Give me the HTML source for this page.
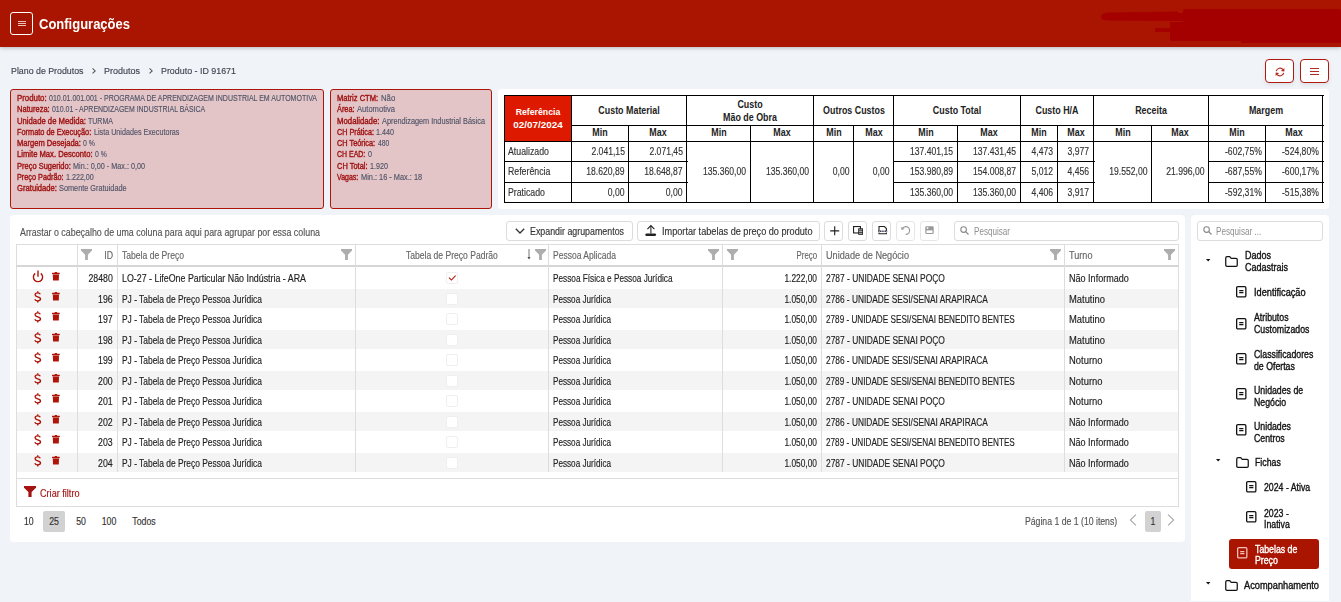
<!DOCTYPE html>
<html><head><meta charset="utf-8"><style>
html,body{margin:0;padding:0;}
body{width:1341px;height:602px;overflow:hidden;position:relative;background:#f0f3f8;font-family:"Liberation Sans", sans-serif;}
.t{position:absolute;white-space:nowrap;}
svg{overflow:visible}
</style></head><body>
<div style="position:absolute;left:0px;top:0px;width:1341px;height:47px;background:#a91500;box-shadow:0 1px 4px rgba(0,0,0,.25);"></div>
<svg style="position:absolute;left:1098px;top:7px" width="243" height="38" viewBox="0 0 243 38"><g fill="#a50000" filter="url(#bl)"><path d="M3 10 Q3 6 10 5.5 L80 4.5 L80 14 L10 13.5 Q3 13 3 10 Z"/><rect x="85" y="2" width="158" height="29" rx="2"/><rect x="76" y="6" width="20" height="8"/><rect x="57" y="21" width="40" height="4"/><rect x="72" y="15" width="20" height="15"/><rect x="72" y="26" width="125" height="8" rx="2"/><rect x="150" y="28" width="93" height="8"/><rect x="143" y="30" width="100" height="6"/></g><defs><filter id="bl"><feGaussianBlur stdDeviation=".5"/></filter></defs></svg>
<div style="position:absolute;left:10px;top:12px;width:21px;height:21px;border:1px solid #fff;border-radius:3px;background:rgba(0,0,0,.03);"></div>
<div style="position:absolute;left:17.5px;top:20.8px;width:8.2px;height:0.9px;background:#ecc0b8;"></div>
<div style="position:absolute;left:17.5px;top:23px;width:8.2px;height:0.9px;background:#ecc0b8;"></div>
<div style="position:absolute;left:17.5px;top:25.2px;width:8.2px;height:0.9px;background:#ecc0b8;"></div>
<div class="t" style="top:17.23px;font-size:14.5px;line-height:14.5px;color:#fff;font-weight:700;left:39px;transform-origin:0 0;transform:scaleX(0.8964);">Configurações</div>
<div class="t" style="top:66.37px;font-size:9.6px;line-height:9.6px;color:#3f4450;-webkit-text-stroke:.15px #3f4450;left:10.5px;transform-origin:0 0;transform:scaleX(0.9183);">Plano de Produtos</div>
<div class="t" style="top:66.37px;font-size:9.6px;line-height:9.6px;color:#3f4450;-webkit-text-stroke:.15px #3f4450;left:104px;transform-origin:0 0;transform:scaleX(0.9373);">Produtos</div>
<div class="t" style="top:66.37px;font-size:9.6px;line-height:9.6px;color:#3f4450;-webkit-text-stroke:.15px #3f4450;left:161.4px;transform-origin:0 0;transform:scaleX(0.9250);">Produto - ID 91671</div>
<svg style="position:absolute;left:91.8px;top:68.3px" width="4" height="6" viewBox="0 0 4 6"><path d="M.5 .4 L3.2 2.9 L.5 5.4" stroke="#555" stroke-width="1.05" fill="none"/></svg>
<svg style="position:absolute;left:148.8px;top:68.3px" width="4" height="6" viewBox="0 0 4 6"><path d="M.5 .4 L3.2 2.9 L.5 5.4" stroke="#555" stroke-width="1.05" fill="none"/></svg>
<div style="position:absolute;left:1265px;top:59px;width:29px;height:24px;box-sizing:border-box;background:#fff;border:1.5px solid #b01a10;border-radius:4px;box-shadow:0 2px 4px rgba(0,0,0,.08);"></div>
<div style="position:absolute;left:1300px;top:59px;width:29px;height:24px;box-sizing:border-box;background:#fff;border:1.5px solid #b01a10;border-radius:4px;box-shadow:0 2px 4px rgba(0,0,0,.08);"></div>
<svg style="position:absolute;left:1274.8px;top:66.5px" width="10" height="10" viewBox="0 0 10 10"><path d="M1.3 4.2 A3.8 3.8 0 0 1 8 2.6" stroke="#b52a20" stroke-width="1.2" fill="none"/><path d="M9.4 1 L9.4 4.6 L5.8 4 Z" fill="#b52a20"/><path d="M8.7 5.8 A3.8 3.8 0 0 1 2 7.4" stroke="#b52a20" stroke-width="1.2" fill="none"/><path d="M.6 9 L.6 5.4 L4.2 6 Z" fill="#b52a20"/></svg>
<div style="position:absolute;left:1310px;top:68px;width:8.5px;height:1.2px;background:#b52a20;"></div>
<div style="position:absolute;left:1310px;top:71px;width:8.5px;height:1.2px;background:#b52a20;"></div>
<div style="position:absolute;left:1310px;top:74px;width:8.5px;height:1.2px;background:#b52a20;"></div>
<div style="position:absolute;left:10px;top:89px;width:314px;height:120px;box-sizing:border-box;background:#e4c5c7;border:1.2px solid #ad1509;border-radius:3px;"></div>
<div style="position:absolute;left:330px;top:89px;width:162px;height:120px;box-sizing:border-box;background:#e4c5c7;border:1.2px solid #ad1509;border-radius:3px;"></div>
<div class="t" style="top:93.94px;font-size:8.7px;line-height:8.7px;color:#a01414;-webkit-text-stroke:.4px #a01414;left:17px;transform-origin:0 0;transform:scaleX(0.9012);">Produto:</div>
<div class="t" style="top:93.94px;font-size:8.7px;line-height:8.7px;color:#4f5468;-webkit-text-stroke:.15px #4f5468;left:49.0px;transform-origin:0 0;transform:scaleX(0.8072);">010.01.001.001 - PROGRAMA DE APRENDIZAGEM INDUSTRIAL EM AUTOMOTIVA</div>
<div class="t" style="top:105.04px;font-size:8.7px;line-height:8.7px;color:#a01414;-webkit-text-stroke:.4px #a01414;left:17px;transform-origin:0 0;transform:scaleX(0.8680);">Natureza:</div>
<div class="t" style="top:105.04px;font-size:8.7px;line-height:8.7px;color:#4f5468;-webkit-text-stroke:.15px #4f5468;left:52.1px;transform-origin:0 0;transform:scaleX(0.8007);">010.01 - APRENDIZAGEM INDUSTRIAL BÁSICA</div>
<div class="t" style="top:116.94px;font-size:8.7px;line-height:8.7px;color:#a01414;-webkit-text-stroke:.4px #a01414;left:17px;transform-origin:0 0;transform:scaleX(0.8873);">Unidade de Medida:</div>
<div class="t" style="top:116.94px;font-size:8.7px;line-height:8.7px;color:#4f5468;-webkit-text-stroke:.15px #4f5468;left:88.4px;transform-origin:0 0;transform:scaleX(0.8093);">TURMA</div>
<div class="t" style="top:128.04px;font-size:8.7px;line-height:8.7px;color:#a01414;-webkit-text-stroke:.4px #a01414;left:17px;transform-origin:0 0;transform:scaleX(0.8489);">Formato de Execução:</div>
<div class="t" style="top:128.04px;font-size:8.7px;line-height:8.7px;color:#4f5468;-webkit-text-stroke:.15px #4f5468;left:93.60000000000001px;transform-origin:0 0;transform:scaleX(0.8264);">Lista Unidades Executoras</div>
<div class="t" style="top:138.94px;font-size:8.7px;line-height:8.7px;color:#a01414;-webkit-text-stroke:.4px #a01414;left:17px;transform-origin:0 0;transform:scaleX(0.8705);">Margem Desejada:</div>
<div class="t" style="top:138.94px;font-size:8.7px;line-height:8.7px;color:#4f5468;-webkit-text-stroke:.15px #4f5468;left:83.30000000000001px;transform-origin:0 0;transform:scaleX(0.7942);">0 %</div>
<div class="t" style="top:149.84px;font-size:8.7px;line-height:8.7px;color:#a01414;-webkit-text-stroke:.4px #a01414;left:17px;transform-origin:0 0;transform:scaleX(0.8795);">Limite Max. Desconto:</div>
<div class="t" style="top:149.84px;font-size:8.7px;line-height:8.7px;color:#4f5468;-webkit-text-stroke:.15px #4f5468;left:95.0px;transform-origin:0 0;transform:scaleX(0.7875);">0 %</div>
<div class="t" style="top:161.74px;font-size:8.7px;line-height:8.7px;color:#a01414;-webkit-text-stroke:.4px #a01414;left:17px;transform-origin:0 0;transform:scaleX(0.8634);">Preço Sugerido:</div>
<div class="t" style="top:161.74px;font-size:8.7px;line-height:8.7px;color:#4f5468;-webkit-text-stroke:.15px #4f5468;left:73.2px;transform-origin:0 0;transform:scaleX(0.8330);">Min.: 0,00 - Max.: 0,00</div>
<div class="t" style="top:172.54px;font-size:8.7px;line-height:8.7px;color:#a01414;-webkit-text-stroke:.4px #a01414;left:17px;transform-origin:0 0;transform:scaleX(0.8389);">Preço Padrão:</div>
<div class="t" style="top:172.54px;font-size:8.7px;line-height:8.7px;color:#4f5468;-webkit-text-stroke:.15px #4f5468;left:66.0px;transform-origin:0 0;transform:scaleX(0.8218);">1.222,00</div>
<div class="t" style="top:183.84px;font-size:8.7px;line-height:8.7px;color:#a01414;-webkit-text-stroke:.4px #a01414;left:17px;transform-origin:0 0;transform:scaleX(0.8809);">Gratuidade:</div>
<div class="t" style="top:183.84px;font-size:8.7px;line-height:8.7px;color:#4f5468;-webkit-text-stroke:.15px #4f5468;left:59.4px;transform-origin:0 0;transform:scaleX(0.8432);">Somente Gratuidade</div>
<div class="t" style="top:94.14px;font-size:8.7px;line-height:8.7px;color:#a01414;-webkit-text-stroke:.4px #a01414;left:337px;transform-origin:0 0;transform:scaleX(0.8690);">Matriz CTM:</div>
<div class="t" style="top:94.14px;font-size:8.7px;line-height:8.7px;color:#4f5468;-webkit-text-stroke:.15px #4f5468;left:380.5px;transform-origin:0 0;transform:scaleX(0.8910);">Não</div>
<div class="t" style="top:105.24px;font-size:8.7px;line-height:8.7px;color:#a01414;-webkit-text-stroke:.4px #a01414;left:337px;transform-origin:0 0;transform:scaleX(0.8476);">Área:</div>
<div class="t" style="top:105.24px;font-size:8.7px;line-height:8.7px;color:#4f5468;-webkit-text-stroke:.15px #4f5468;left:357.0px;transform-origin:0 0;transform:scaleX(0.8742);">Automotiva</div>
<div class="t" style="top:116.84px;font-size:8.7px;line-height:8.7px;color:#a01414;-webkit-text-stroke:.4px #a01414;left:337px;transform-origin:0 0;transform:scaleX(0.8956);">Modalidade:</div>
<div class="t" style="top:116.84px;font-size:8.7px;line-height:8.7px;color:#4f5468;-webkit-text-stroke:.15px #4f5468;left:381.79999999999995px;transform-origin:0 0;transform:scaleX(0.8430);">Aprendizagem Industrial Básica</div>
<div class="t" style="top:128.14px;font-size:8.7px;line-height:8.7px;color:#a01414;-webkit-text-stroke:.4px #a01414;left:337px;transform-origin:0 0;transform:scaleX(0.8329);">CH Prática:</div>
<div class="t" style="top:128.14px;font-size:8.7px;line-height:8.7px;color:#4f5468;-webkit-text-stroke:.15px #4f5468;left:376.4px;transform-origin:0 0;transform:scaleX(0.8230);">1.440</div>
<div class="t" style="top:138.94px;font-size:8.7px;line-height:8.7px;color:#a01414;-webkit-text-stroke:.4px #a01414;left:337px;transform-origin:0 0;transform:scaleX(0.8423);">CH Teórica:</div>
<div class="t" style="top:138.94px;font-size:8.7px;line-height:8.7px;color:#4f5468;-webkit-text-stroke:.15px #4f5468;left:377.5px;transform-origin:0 0;transform:scaleX(0.7793);">480</div>
<div class="t" style="top:149.74px;font-size:8.7px;line-height:8.7px;color:#a01414;-webkit-text-stroke:.4px #a01414;left:337px;transform-origin:0 0;transform:scaleX(0.8028);">CH EAD:</div>
<div class="t" style="top:149.74px;font-size:8.7px;line-height:8.7px;color:#4f5468;-webkit-text-stroke:.15px #4f5468;left:367.7px;transform-origin:0 0;transform:scaleX(0.8258);">0</div>
<div class="t" style="top:162.04px;font-size:8.7px;line-height:8.7px;color:#a01414;-webkit-text-stroke:.4px #a01414;left:337px;transform-origin:0 0;transform:scaleX(0.8573);">CH Total:</div>
<div class="t" style="top:162.04px;font-size:8.7px;line-height:8.7px;color:#4f5468;-webkit-text-stroke:.15px #4f5468;left:369.9px;transform-origin:0 0;transform:scaleX(0.8230);">1.920</div>
<div class="t" style="top:172.84px;font-size:8.7px;line-height:8.7px;color:#a01414;-webkit-text-stroke:.4px #a01414;left:337px;transform-origin:0 0;transform:scaleX(0.8066);">Vagas:</div>
<div class="t" style="top:172.84px;font-size:8.7px;line-height:8.7px;color:#4f5468;-webkit-text-stroke:.15px #4f5468;left:360.7px;transform-origin:0 0;transform:scaleX(0.8506);">Min.: 16 - Max.: 18</div>
<div style="position:absolute;left:498px;top:89px;width:830.5px;height:119.5px;background:#fff;border-radius:4px;"></div>
<div style="position:absolute;left:505px;top:96px;width:66px;height:45px;background:#dd1a00;"></div>
<div style="position:absolute;left:504px;top:94.5px;width:819.5px;height:1.2px;background:#000;"></div>
<div style="position:absolute;left:504px;top:201.5px;width:819.5px;height:1.2px;background:#000;"></div>
<div style="position:absolute;left:504px;top:140.5px;width:819.5px;height:1.2px;background:#000;"></div>
<div style="position:absolute;left:571px;top:125.0px;width:752.5px;height:1.2px;background:#000;"></div>
<div style="position:absolute;left:504px;top:161.0px;width:183.5px;height:1.2px;background:#000;"></div>
<div style="position:absolute;left:893.5px;top:161.0px;width:201.0px;height:1.2px;background:#000;"></div>
<div style="position:absolute;left:1208.5px;top:161.0px;width:115.0px;height:1.2px;background:#000;"></div>
<div style="position:absolute;left:504px;top:182.0px;width:183.5px;height:1.2px;background:#000;"></div>
<div style="position:absolute;left:893.5px;top:182.0px;width:201.0px;height:1.2px;background:#000;"></div>
<div style="position:absolute;left:1208.5px;top:182.0px;width:115.0px;height:1.2px;background:#000;"></div>
<div style="position:absolute;left:503.5px;top:95px;width:1.2px;height:108px;background:#000;"></div>
<div style="position:absolute;left:570.5px;top:95px;width:1.2px;height:108px;background:#000;"></div>
<div style="position:absolute;left:686.0px;top:95px;width:1.2px;height:108px;background:#000;"></div>
<div style="position:absolute;left:813.0px;top:95px;width:1.2px;height:108px;background:#000;"></div>
<div style="position:absolute;left:893.0px;top:95px;width:1.2px;height:108px;background:#000;"></div>
<div style="position:absolute;left:1020.0px;top:95px;width:1.2px;height:108px;background:#000;"></div>
<div style="position:absolute;left:1093.0px;top:95px;width:1.2px;height:108px;background:#000;"></div>
<div style="position:absolute;left:1208.0px;top:95px;width:1.2px;height:108px;background:#000;"></div>
<div style="position:absolute;left:1322.0px;top:95px;width:1.2px;height:108px;background:#000;"></div>
<div style="position:absolute;left:628.0px;top:125.5px;width:1.2px;height:77.5px;background:#000;"></div>
<div style="position:absolute;left:750.0px;top:125.5px;width:1.2px;height:77.5px;background:#000;"></div>
<div style="position:absolute;left:853.0px;top:125.5px;width:1.2px;height:77.5px;background:#000;"></div>
<div style="position:absolute;left:957.0px;top:125.5px;width:1.2px;height:77.5px;background:#000;"></div>
<div style="position:absolute;left:1057.0px;top:125.5px;width:1.2px;height:77.5px;background:#000;"></div>
<div style="position:absolute;left:1151.0px;top:125.5px;width:1.2px;height:77.5px;background:#000;"></div>
<div style="position:absolute;left:1265.0px;top:125.5px;width:1.2px;height:77.5px;background:#000;"></div>
<div class="t" style="top:107.36px;font-size:9.5px;line-height:9.5px;color:#fff;font-weight:700;left:537.5px;transform-origin:50% 0;transform:translateX(-50%) scaleX(0.9178);">Referência</div>
<div class="t" style="top:120.26px;font-size:9.5px;line-height:9.5px;color:#fff;font-weight:700;left:537.5px;transform-origin:50% 0;transform:translateX(-50%) scaleX(1.0390);">02/07/2024</div>
<div class="t" style="top:106.04px;font-size:10px;line-height:10px;color:#222;font-weight:700;left:628.75px;transform-origin:50% 0;transform:translateX(-50%) scaleX(0.8900);">Custo Material</div>
<div class="t" style="top:106.04px;font-size:10px;line-height:10px;color:#222;font-weight:700;left:853.5px;transform-origin:50% 0;transform:translateX(-50%) scaleX(0.8900);">Outros Custos</div>
<div class="t" style="top:106.04px;font-size:10px;line-height:10px;color:#222;font-weight:700;left:957.0px;transform-origin:50% 0;transform:translateX(-50%) scaleX(0.8900);">Custo Total</div>
<div class="t" style="top:106.04px;font-size:10px;line-height:10px;color:#222;font-weight:700;left:1057.0px;transform-origin:50% 0;transform:translateX(-50%) scaleX(0.8900);">Custo H/A</div>
<div class="t" style="top:106.04px;font-size:10px;line-height:10px;color:#222;font-weight:700;left:1151.0px;transform-origin:50% 0;transform:translateX(-50%) scaleX(0.8900);">Receita</div>
<div class="t" style="top:106.04px;font-size:10px;line-height:10px;color:#222;font-weight:700;left:1265.75px;transform-origin:50% 0;transform:translateX(-50%) scaleX(0.8900);">Margem</div>
<div class="t" style="top:99.54px;font-size:10px;line-height:10px;color:#222;font-weight:700;left:750px;transform-origin:50% 0;transform:translateX(-50%) scaleX(0.8900);">Custo</div>
<div class="t" style="top:112.54px;font-size:10px;line-height:10px;color:#222;font-weight:700;left:750px;transform-origin:50% 0;transform:translateX(-50%) scaleX(0.8900);">Mão de Obra</div>
<div class="t" style="top:127.64px;font-size:10px;line-height:10px;color:#222;font-weight:700;left:599.75px;transform-origin:50% 0;transform:translateX(-50%) scaleX(0.8900);">Min</div>
<div class="t" style="top:127.64px;font-size:10px;line-height:10px;color:#222;font-weight:700;left:657.5px;transform-origin:50% 0;transform:translateX(-50%) scaleX(0.8900);">Max</div>
<div class="t" style="top:127.64px;font-size:10px;line-height:10px;color:#222;font-weight:700;left:718.5px;transform-origin:50% 0;transform:translateX(-50%) scaleX(0.8900);">Min</div>
<div class="t" style="top:127.64px;font-size:10px;line-height:10px;color:#222;font-weight:700;left:782.0px;transform-origin:50% 0;transform:translateX(-50%) scaleX(0.8900);">Max</div>
<div class="t" style="top:127.64px;font-size:10px;line-height:10px;color:#222;font-weight:700;left:833.5px;transform-origin:50% 0;transform:translateX(-50%) scaleX(0.8900);">Min</div>
<div class="t" style="top:127.64px;font-size:10px;line-height:10px;color:#222;font-weight:700;left:873.5px;transform-origin:50% 0;transform:translateX(-50%) scaleX(0.8900);">Max</div>
<div class="t" style="top:127.64px;font-size:10px;line-height:10px;color:#222;font-weight:700;left:925.5px;transform-origin:50% 0;transform:translateX(-50%) scaleX(0.8900);">Min</div>
<div class="t" style="top:127.64px;font-size:10px;line-height:10px;color:#222;font-weight:700;left:989.0px;transform-origin:50% 0;transform:translateX(-50%) scaleX(0.8900);">Max</div>
<div class="t" style="top:127.64px;font-size:10px;line-height:10px;color:#222;font-weight:700;left:1039.0px;transform-origin:50% 0;transform:translateX(-50%) scaleX(0.8900);">Min</div>
<div class="t" style="top:127.64px;font-size:10px;line-height:10px;color:#222;font-weight:700;left:1075.5px;transform-origin:50% 0;transform:translateX(-50%) scaleX(0.8900);">Max</div>
<div class="t" style="top:127.64px;font-size:10px;line-height:10px;color:#222;font-weight:700;left:1122.5px;transform-origin:50% 0;transform:translateX(-50%) scaleX(0.8900);">Min</div>
<div class="t" style="top:127.64px;font-size:10px;line-height:10px;color:#222;font-weight:700;left:1180.0px;transform-origin:50% 0;transform:translateX(-50%) scaleX(0.8900);">Max</div>
<div class="t" style="top:127.64px;font-size:10px;line-height:10px;color:#222;font-weight:700;left:1237.0px;transform-origin:50% 0;transform:translateX(-50%) scaleX(0.8900);">Min</div>
<div class="t" style="top:127.64px;font-size:10px;line-height:10px;color:#222;font-weight:700;left:1294.0px;transform-origin:50% 0;transform:translateX(-50%) scaleX(0.8900);">Max</div>
<div class="t" style="top:146.94px;font-size:10px;line-height:10px;color:#333;-webkit-text-stroke:.15px #333;left:508.3px;transform-origin:0 0;transform:scaleX(0.8750);">Atualizado</div>
<div class="t" style="top:166.94px;font-size:10px;line-height:10px;color:#333;-webkit-text-stroke:.15px #333;left:508.3px;transform-origin:0 0;transform:scaleX(0.8750);">Referência</div>
<div class="t" style="top:187.84px;font-size:10px;line-height:10px;color:#333;-webkit-text-stroke:.15px #333;left:508.3px;transform-origin:0 0;transform:scaleX(0.8750);">Praticado</div>
<div class="t" style="top:146.94px;font-size:10px;line-height:10px;color:#333;-webkit-text-stroke:.15px #333;right:716.5px;transform-origin:100% 0;transform:scaleX(0.8600);">2.041,15</div>
<div class="t" style="top:166.94px;font-size:10px;line-height:10px;color:#333;-webkit-text-stroke:.15px #333;right:716.5px;transform-origin:100% 0;transform:scaleX(0.8600);">18.620,89</div>
<div class="t" style="top:187.84px;font-size:10px;line-height:10px;color:#333;-webkit-text-stroke:.15px #333;right:716.5px;transform-origin:100% 0;transform:scaleX(0.8600);">0,00</div>
<div class="t" style="top:146.94px;font-size:10px;line-height:10px;color:#333;-webkit-text-stroke:.15px #333;right:658.5px;transform-origin:100% 0;transform:scaleX(0.8600);">2.071,45</div>
<div class="t" style="top:166.94px;font-size:10px;line-height:10px;color:#333;-webkit-text-stroke:.15px #333;right:658.5px;transform-origin:100% 0;transform:scaleX(0.8600);">18.648,87</div>
<div class="t" style="top:187.84px;font-size:10px;line-height:10px;color:#333;-webkit-text-stroke:.15px #333;right:658.5px;transform-origin:100% 0;transform:scaleX(0.8600);">0,00</div>
<div class="t" style="top:146.94px;font-size:10px;line-height:10px;color:#333;-webkit-text-stroke:.15px #333;right:387.5px;transform-origin:100% 0;transform:scaleX(0.8600);">137.401,15</div>
<div class="t" style="top:166.94px;font-size:10px;line-height:10px;color:#333;-webkit-text-stroke:.15px #333;right:387.5px;transform-origin:100% 0;transform:scaleX(0.8600);">153.980,89</div>
<div class="t" style="top:187.84px;font-size:10px;line-height:10px;color:#333;-webkit-text-stroke:.15px #333;right:387.5px;transform-origin:100% 0;transform:scaleX(0.8600);">135.360,00</div>
<div class="t" style="top:146.94px;font-size:10px;line-height:10px;color:#333;-webkit-text-stroke:.15px #333;right:324.5px;transform-origin:100% 0;transform:scaleX(0.8600);">137.431,45</div>
<div class="t" style="top:166.94px;font-size:10px;line-height:10px;color:#333;-webkit-text-stroke:.15px #333;right:324.5px;transform-origin:100% 0;transform:scaleX(0.8600);">154.008,87</div>
<div class="t" style="top:187.84px;font-size:10px;line-height:10px;color:#333;-webkit-text-stroke:.15px #333;right:324.5px;transform-origin:100% 0;transform:scaleX(0.8600);">135.360,00</div>
<div class="t" style="top:146.94px;font-size:10px;line-height:10px;color:#333;-webkit-text-stroke:.15px #333;right:287.5px;transform-origin:100% 0;transform:scaleX(0.8600);">4,473</div>
<div class="t" style="top:166.94px;font-size:10px;line-height:10px;color:#333;-webkit-text-stroke:.15px #333;right:287.5px;transform-origin:100% 0;transform:scaleX(0.8600);">5,012</div>
<div class="t" style="top:187.84px;font-size:10px;line-height:10px;color:#333;-webkit-text-stroke:.15px #333;right:287.5px;transform-origin:100% 0;transform:scaleX(0.8600);">4,406</div>
<div class="t" style="top:146.94px;font-size:10px;line-height:10px;color:#333;-webkit-text-stroke:.15px #333;right:251.5px;transform-origin:100% 0;transform:scaleX(0.8600);">3,977</div>
<div class="t" style="top:166.94px;font-size:10px;line-height:10px;color:#333;-webkit-text-stroke:.15px #333;right:251.5px;transform-origin:100% 0;transform:scaleX(0.8600);">4,456</div>
<div class="t" style="top:187.84px;font-size:10px;line-height:10px;color:#333;-webkit-text-stroke:.15px #333;right:251.5px;transform-origin:100% 0;transform:scaleX(0.8600);">3,917</div>
<div class="t" style="top:146.94px;font-size:10px;line-height:10px;color:#333;-webkit-text-stroke:.15px #333;right:79.5px;transform-origin:100% 0;transform:scaleX(0.8600);">-602,75%</div>
<div class="t" style="top:166.94px;font-size:10px;line-height:10px;color:#333;-webkit-text-stroke:.15px #333;right:79.5px;transform-origin:100% 0;transform:scaleX(0.8600);">-687,55%</div>
<div class="t" style="top:187.84px;font-size:10px;line-height:10px;color:#333;-webkit-text-stroke:.15px #333;right:79.5px;transform-origin:100% 0;transform:scaleX(0.8600);">-592,31%</div>
<div class="t" style="top:146.94px;font-size:10px;line-height:10px;color:#333;-webkit-text-stroke:.15px #333;right:22.5px;transform-origin:100% 0;transform:scaleX(0.8600);">-524,80%</div>
<div class="t" style="top:166.94px;font-size:10px;line-height:10px;color:#333;-webkit-text-stroke:.15px #333;right:22.5px;transform-origin:100% 0;transform:scaleX(0.8600);">-600,17%</div>
<div class="t" style="top:187.84px;font-size:10px;line-height:10px;color:#333;-webkit-text-stroke:.15px #333;right:22.5px;transform-origin:100% 0;transform:scaleX(0.8600);">-515,38%</div>
<div class="t" style="top:166.94px;font-size:10px;line-height:10px;color:#333;-webkit-text-stroke:.15px #333;right:594.5px;transform-origin:100% 0;transform:scaleX(0.8600);">135.360,00</div>
<div class="t" style="top:166.94px;font-size:10px;line-height:10px;color:#333;-webkit-text-stroke:.15px #333;right:531.5px;transform-origin:100% 0;transform:scaleX(0.8600);">135.360,00</div>
<div class="t" style="top:166.94px;font-size:10px;line-height:10px;color:#333;-webkit-text-stroke:.15px #333;right:491.5px;transform-origin:100% 0;transform:scaleX(0.8600);">0,00</div>
<div class="t" style="top:166.94px;font-size:10px;line-height:10px;color:#333;-webkit-text-stroke:.15px #333;right:451.5px;transform-origin:100% 0;transform:scaleX(0.8600);">0,00</div>
<div class="t" style="top:166.94px;font-size:10px;line-height:10px;color:#333;-webkit-text-stroke:.15px #333;right:193.5px;transform-origin:100% 0;transform:scaleX(0.8600);">19.552,00</div>
<div class="t" style="top:166.94px;font-size:10px;line-height:10px;color:#333;-webkit-text-stroke:.15px #333;right:136.5px;transform-origin:100% 0;transform:scaleX(0.8600);">21.996,00</div>
<div style="position:absolute;left:10px;top:215px;width:1175px;height:327px;background:#fff;border-radius:4px;"></div>
<div class="t" style="top:228.24px;font-size:10px;line-height:10px;color:#555;-webkit-text-stroke:.15px #555;left:20px;transform-origin:0 0;transform:scaleX(0.8861);">Arrastar o cabeçalho de uma coluna para aqui para agrupar por essa coluna</div>
<div style="position:absolute;left:506px;top:221px;width:127px;height:20px;box-sizing:border-box;background:#fff;border:1px solid #dcdcdc;border-radius:3px;"></div>
<svg style="position:absolute;left:515px;top:227.5px" width="10" height="6" viewBox="0 0 10 6"><path d="M.8 .8 L5 5 L9.2 .8" stroke="#333" stroke-width="1.3" fill="none"/></svg>
<div class="t" style="top:227.04px;font-size:10px;line-height:10px;color:#333;-webkit-text-stroke:.15px #333;left:530.4px;transform-origin:0 0;transform:scaleX(0.8852);">Expandir agrupamentos</div>
<div style="position:absolute;left:637px;top:221px;width:183px;height:20px;box-sizing:border-box;background:#fff;border:1px solid #dcdcdc;border-radius:3px;"></div>
<svg style="position:absolute;left:645px;top:225px" width="12" height="12" viewBox="0 0 12 12"><path d="M5.9 .8 V8.6" stroke="#222" stroke-width="1.05"/><path d="M2.4 4.1 L5.9 .6 L9.4 4.1" stroke="#222" stroke-width="1.1" fill="none"/><rect x=".3" y="8.4" width="10.8" height="2.7" rx="1.3" fill="#222"/></svg>
<div class="t" style="top:227.04px;font-size:10px;line-height:10px;color:#333;-webkit-text-stroke:.15px #333;left:661.5px;transform-origin:0 0;transform:scaleX(0.9146);">Importar tabelas de preço do produto</div>
<div style="position:absolute;left:824px;top:221px;width:19px;height:20px;box-sizing:border-box;background:#fff;border:1px solid #dcdcdc;border-radius:3px;"></div>
<div style="position:absolute;left:848px;top:221px;width:19px;height:20px;box-sizing:border-box;background:#fff;border:1px solid #dcdcdc;border-radius:3px;"></div>
<div style="position:absolute;left:872px;top:221px;width:19px;height:20px;box-sizing:border-box;background:#fff;border:1px solid #dcdcdc;border-radius:3px;"></div>
<div style="position:absolute;left:896px;top:221px;width:19px;height:20px;box-sizing:border-box;background:#fff;border:1px solid #e6e6e6;border-radius:3px;"></div>
<div style="position:absolute;left:920px;top:221px;width:19px;height:20px;box-sizing:border-box;background:#fff;border:1px solid #e6e6e6;border-radius:3px;"></div>
<svg style="position:absolute;left:829.8px;top:225.8px" width="10" height="10" viewBox="0 0 10 10"><path d="M4.7 .3 V9.3 M.2 4.8 H9.2" stroke="#222" stroke-width="1.15"/></svg>
<svg style="position:absolute;left:853px;top:225.8px" width="11" height="9" viewBox="0 0 11 9"><rect x=".55" y=".55" width="6.9" height="6.4" fill="none" stroke="#222" stroke-width="1.1"/><rect x="5.2" y="2.3" width="4.8" height="6.5" fill="#222"/><path d="M6.1 3.9 H9.2 M6.1 5.6 H9.2 M6.1 7.3 H9.2" stroke="#e8e8e8" stroke-width=".8"/></svg>
<svg style="position:absolute;left:877.6px;top:225.8px" width="10" height="9" viewBox="0 0 10 9"><path d="M1 5 V.55 H6.4 L8.4 2.5 V5" fill="none" stroke="#222" stroke-width="1.1"/><path d="M.2 5.3 H9.2" stroke="#3a3a50" stroke-width="1.5" stroke-dasharray="1.2 .5"/><path d="M1 6.6 V7.8 H8.4 V6.6" fill="none" stroke="#222" stroke-width="1.1"/></svg>
<svg style="position:absolute;left:900px;top:225.5px" width="11" height="10" viewBox="0 0 11 10"><path d="M2.8 2.2 Q4.1 .6 5.7 .6 A3.9 3.9 0 0 1 5.7 8.4" fill="none" stroke="#999" stroke-width="1.2"/><path d="M1.2 .8 L1.5 4.1 L4.5 3.1 Z" fill="#999"/></svg>
<svg style="position:absolute;left:925px;top:225.8px" width="9" height="9" viewBox="0 0 9 9"><rect x=".3" y=".2" width="8.4" height="7.9" rx="1.3" fill="#999"/><rect x="1.5" y="4.4" width="6" height="2.6" fill="#fff"/><rect x="1.8" y="1.2" width="1.5" height="1.7" fill="#fff"/></svg>
<div style="position:absolute;left:954px;top:221px;width:225px;height:20px;box-sizing:border-box;background:#fff;border:1px solid #dcdcdc;border-radius:3px;"></div>
<svg style="position:absolute;left:960px;top:225.6px" width="9" height="9" viewBox="0 0 9 9"><circle cx="3.6" cy="3.6" r="2.8" fill="none" stroke="#888" stroke-width="1.1"/><path d="M5.7 5.7 L8.5 8.5" stroke="#888" stroke-width="1.2"/></svg>
<div class="t" style="top:227.04px;font-size:10px;line-height:10px;color:#8f8f8f;-webkit-text-stroke:0;left:973.7px;transform-origin:0 0;transform:scaleX(0.8096);">Pesquisar</div>
<div style="position:absolute;left:16px;top:244px;width:1163px;height:235px;box-sizing:border-box;border:1px solid #ddd;border-bottom:none;"></div>
<div style="position:absolute;left:16px;top:265px;width:1163px;height:2px;background:#d6d6d6;"></div>
<div style="position:absolute;left:17px;top:289px;width:1161px;height:19px;background:#f4f4f4;"></div>
<div style="position:absolute;left:17px;top:330px;width:1161px;height:19px;background:#f4f4f4;"></div>
<div style="position:absolute;left:17px;top:371px;width:1161px;height:19px;background:#f4f4f4;"></div>
<div style="position:absolute;left:17px;top:412px;width:1161px;height:19px;background:#f4f4f4;"></div>
<div style="position:absolute;left:17px;top:453px;width:1161px;height:19px;background:#f4f4f4;"></div>
<div style="position:absolute;left:77px;top:244px;width:1px;height:228px;background:#ddd;"></div>
<div style="position:absolute;left:117px;top:244px;width:1px;height:228px;background:#ddd;"></div>
<div style="position:absolute;left:355px;top:244px;width:1px;height:228px;background:#ddd;"></div>
<div style="position:absolute;left:548px;top:244px;width:1px;height:228px;background:#ddd;"></div>
<div style="position:absolute;left:722px;top:244px;width:1px;height:228px;background:#ddd;"></div>
<div style="position:absolute;left:821px;top:244px;width:1px;height:228px;background:#ddd;"></div>
<div style="position:absolute;left:1064px;top:244px;width:1px;height:228px;background:#ddd;"></div>
<div style="position:absolute;left:16px;top:478px;width:1163px;height:29px;box-sizing:border-box;border:1px solid #ddd;"></div>
<svg style="position:absolute;left:24px;top:485.8px" width="12" height="11" viewBox="0 0 12 11"><path d="M0 0 H12 V1.8 L7.6 6.1 V11 H4.4 V6.1 L0 1.8 Z" fill="#a51212"/></svg>
<div class="t" style="top:488.54px;font-size:10px;line-height:10px;color:#a51212;-webkit-text-stroke:.15px #a51212;left:40.3px;transform-origin:0 0;transform:scaleX(0.9113);">Criar filtro</div>
<svg style="position:absolute;left:81.3px;top:248.6px" width="11" height="11" viewBox="0 0 11 11"><path d="M0 0 H11 V1.6 L6.9 5.8 V11 H4.1 V5.8 L0 1.6 Z" fill="#adadad"/></svg>
<div class="t" style="top:251.04px;font-size:10px;line-height:10px;color:#666;-webkit-text-stroke:.15px #666;right:1228px;transform-origin:100% 0;transform:scaleX(0.8750);">ID</div>
<div class="t" style="top:251.04px;font-size:10px;line-height:10px;color:#666;-webkit-text-stroke:.15px #666;left:122px;transform-origin:0 0;transform:scaleX(0.8578);">Tabela de Preço</div>
<svg style="position:absolute;left:341px;top:248.6px" width="11" height="11" viewBox="0 0 11 11"><path d="M0 0 H11 V1.6 L6.9 5.8 V11 H4.1 V5.8 L0 1.6 Z" fill="#adadad"/></svg>
<div class="t" style="top:251.04px;font-size:10px;line-height:10px;color:#666;-webkit-text-stroke:.15px #666;left:406.2px;transform-origin:0 0;transform:scaleX(0.8556);">Tabela de Preço Padrão</div>
<svg style="position:absolute;left:526.5px;top:249px" width="4" height="11" viewBox="0 0 4 11"><path d="M2 0 V10" stroke="#777" stroke-width="1"/><path d="M.4 8 L2 10.3 L3.6 8 Z" fill="#555"/></svg>
<svg style="position:absolute;left:534.5px;top:248.6px" width="11" height="11" viewBox="0 0 11 11"><path d="M0 0 H11 V1.6 L6.9 5.8 V11 H4.1 V5.8 L0 1.6 Z" fill="#adadad"/></svg>
<div class="t" style="top:251.04px;font-size:10px;line-height:10px;color:#666;-webkit-text-stroke:.15px #666;left:553.2px;transform-origin:0 0;transform:scaleX(0.8519);">Pessoa Aplicada</div>
<svg style="position:absolute;left:708px;top:248.6px" width="11" height="11" viewBox="0 0 11 11"><path d="M0 0 H11 V1.6 L6.9 5.8 V11 H4.1 V5.8 L0 1.6 Z" fill="#adadad"/></svg>
<svg style="position:absolute;left:727.2px;top:248.6px" width="11" height="11" viewBox="0 0 11 11"><path d="M0 0 H11 V1.6 L6.9 5.8 V11 H4.1 V5.8 L0 1.6 Z" fill="#adadad"/></svg>
<div class="t" style="top:251.04px;font-size:10px;line-height:10px;color:#666;-webkit-text-stroke:.15px #666;right:523.8px;transform-origin:100% 0;transform:scaleX(0.7847);">Preço</div>
<div class="t" style="top:251.04px;font-size:10px;line-height:10px;color:#666;-webkit-text-stroke:.15px #666;left:826px;transform-origin:0 0;transform:scaleX(0.9159);">Unidade de Negócio</div>
<svg style="position:absolute;left:1049.7px;top:248.6px" width="11" height="11" viewBox="0 0 11 11"><path d="M0 0 H11 V1.6 L6.9 5.8 V11 H4.1 V5.8 L0 1.6 Z" fill="#adadad"/></svg>
<div class="t" style="top:251.04px;font-size:10px;line-height:10px;color:#666;-webkit-text-stroke:.15px #666;left:1068.9px;transform-origin:0 0;transform:scaleX(0.9121);">Turno</div>
<svg style="position:absolute;left:1164px;top:248.6px" width="11" height="11" viewBox="0 0 11 11"><path d="M0 0 H11 V1.6 L6.9 5.8 V11 H4.1 V5.8 L0 1.6 Z" fill="#adadad"/></svg>
<svg style="position:absolute;left:32px;top:269.7px" width="12" height="12" viewBox="0 0 12 12"><path d="M3.2 3.4 A4.6 4.6 0 1 0 8.8 3.4" fill="none" stroke="#b01408" stroke-width="1.4"/><path d="M6 .6 V6.8" stroke="#b01408" stroke-width="1.4"/></svg>
<svg style="position:absolute;left:51.9px;top:271.8px" width="8" height="9" viewBox="0 0 8 9"><rect x="0" y=".7" width="7.8" height="1.5" rx=".4" fill="#b01408"/><rect x="2.6" y="0" width="2.6" height="1" rx=".4" fill="#b01408"/><path d="M.8 2.5 H7 L6.8 8.2 Q6.8 8.5 6.5 8.5 H1.3 Q1 8.5 1 8.2 Z" fill="#b01408"/></svg>
<div class="t" style="top:274.04px;font-size:10px;line-height:10px;color:#222;-webkit-text-stroke:.15px #222;right:1228px;transform-origin:100% 0;transform:scaleX(0.8750);">28480</div>
<div class="t" style="top:274.04px;font-size:10px;line-height:10px;color:#222;-webkit-text-stroke:.15px #222;left:122px;transform-origin:0 0;transform:scaleX(0.8851);">LO-27 - LifeOne Particular Não Indústria - ARA</div>
<div style="position:absolute;left:446px;top:272.0px;width:12px;height:12px;box-sizing:border-box;background:#fff;border:1px solid #efefef;border-radius:2px;"></div>
<svg style="position:absolute;left:448px;top:274.5px" width="9" height="6" viewBox="0 0 9 6"><path d="M1 2.6 L3.4 5 L7.6 .6" fill="none" stroke="#b01408" stroke-width="1.05"/></svg>
<div class="t" style="top:274.04px;font-size:10px;line-height:10px;color:#222;-webkit-text-stroke:.15px #222;left:553.2px;transform-origin:0 0;transform:scaleX(0.8237);">Pessoa Física e Pessoa Jurídica</div>
<div class="t" style="top:274.04px;font-size:10px;line-height:10px;color:#222;-webkit-text-stroke:.15px #222;right:523.8px;transform-origin:100% 0;transform:scaleX(0.8347);">1.222,00</div>
<div class="t" style="top:274.04px;font-size:10px;line-height:10px;color:#222;-webkit-text-stroke:.15px #222;left:826px;transform-origin:0 0;transform:scaleX(0.8423);">2787 - UNIDADE SENAI POÇO</div>
<div class="t" style="top:274.04px;font-size:10px;line-height:10px;color:#222;-webkit-text-stroke:.15px #222;left:1069px;transform-origin:0 0;transform:scaleX(0.9039);">Não Informado</div>
<svg style="position:absolute;left:34.2px;top:290.5px" width="7.5" height="12" viewBox="0 0 7.5 12"><path d="M3.75 .2 V1.8 M3.75 9.6 V11.4" stroke="#b01408" stroke-width="1.3"/><path d="M6.3 3.2 C5.9 2.3 5 1.8 3.75 1.8 C2.2 1.8 1.1 2.6 1.1 3.8 C1.1 5.1 2.3 5.5 3.75 5.9 C5.3 6.3 6.5 6.8 6.5 8 C6.5 9.2 5.3 9.8 3.75 9.8 C2.3 9.8 1.2 9.2 .8 8.2" fill="none" stroke="#b01408" stroke-width="1.35"/></svg>
<svg style="position:absolute;left:51.9px;top:291.7px" width="8" height="9" viewBox="0 0 8 9"><rect x="0" y=".7" width="7.8" height="1.5" rx=".4" fill="#b01408"/><rect x="2.6" y="0" width="2.6" height="1" rx=".4" fill="#b01408"/><path d="M.8 2.5 H7 L6.8 8.2 Q6.8 8.5 6.5 8.5 H1.3 Q1 8.5 1 8.2 Z" fill="#b01408"/></svg>
<div class="t" style="top:294.54px;font-size:10px;line-height:10px;color:#222;-webkit-text-stroke:.15px #222;right:1228px;transform-origin:100% 0;transform:scaleX(0.8750);">196</div>
<div class="t" style="top:294.54px;font-size:10px;line-height:10px;color:#222;-webkit-text-stroke:.15px #222;left:122px;transform-origin:0 0;transform:scaleX(0.8404);">PJ - Tabela de Preço Pessoa Jurídica</div>
<div style="position:absolute;left:446px;top:292.5px;width:12px;height:12px;box-sizing:border-box;background:#fff;border:1px solid #efefef;border-radius:2px;"></div>
<div class="t" style="top:294.54px;font-size:10px;line-height:10px;color:#222;-webkit-text-stroke:.15px #222;left:553.2px;transform-origin:0 0;transform:scaleX(0.8151);">Pessoa Jurídica</div>
<div class="t" style="top:294.54px;font-size:10px;line-height:10px;color:#222;-webkit-text-stroke:.15px #222;right:523.8px;transform-origin:100% 0;transform:scaleX(0.8347);">1.050,00</div>
<div class="t" style="top:294.54px;font-size:10px;line-height:10px;color:#222;-webkit-text-stroke:.15px #222;left:826px;transform-origin:0 0;transform:scaleX(0.8318);">2786 - UNIDADE SESI/SENAI ARAPIRACA</div>
<div class="t" style="top:294.54px;font-size:10px;line-height:10px;color:#222;-webkit-text-stroke:.15px #222;left:1069px;transform-origin:0 0;transform:scaleX(0.9385);">Matutino</div>
<svg style="position:absolute;left:34.2px;top:311.0px" width="7.5" height="12" viewBox="0 0 7.5 12"><path d="M3.75 .2 V1.8 M3.75 9.6 V11.4" stroke="#b01408" stroke-width="1.3"/><path d="M6.3 3.2 C5.9 2.3 5 1.8 3.75 1.8 C2.2 1.8 1.1 2.6 1.1 3.8 C1.1 5.1 2.3 5.5 3.75 5.9 C5.3 6.3 6.5 6.8 6.5 8 C6.5 9.2 5.3 9.8 3.75 9.8 C2.3 9.8 1.2 9.2 .8 8.2" fill="none" stroke="#b01408" stroke-width="1.35"/></svg>
<svg style="position:absolute;left:51.9px;top:312.2px" width="8" height="9" viewBox="0 0 8 9"><rect x="0" y=".7" width="7.8" height="1.5" rx=".4" fill="#b01408"/><rect x="2.6" y="0" width="2.6" height="1" rx=".4" fill="#b01408"/><path d="M.8 2.5 H7 L6.8 8.2 Q6.8 8.5 6.5 8.5 H1.3 Q1 8.5 1 8.2 Z" fill="#b01408"/></svg>
<div class="t" style="top:315.04px;font-size:10px;line-height:10px;color:#222;-webkit-text-stroke:.15px #222;right:1228px;transform-origin:100% 0;transform:scaleX(0.8750);">197</div>
<div class="t" style="top:315.04px;font-size:10px;line-height:10px;color:#222;-webkit-text-stroke:.15px #222;left:122px;transform-origin:0 0;transform:scaleX(0.8404);">PJ - Tabela de Preço Pessoa Jurídica</div>
<div style="position:absolute;left:446px;top:313.0px;width:12px;height:12px;box-sizing:border-box;background:#fff;border:1px solid #efefef;border-radius:2px;"></div>
<div class="t" style="top:315.04px;font-size:10px;line-height:10px;color:#222;-webkit-text-stroke:.15px #222;left:553.2px;transform-origin:0 0;transform:scaleX(0.8151);">Pessoa Jurídica</div>
<div class="t" style="top:315.04px;font-size:10px;line-height:10px;color:#222;-webkit-text-stroke:.15px #222;right:523.8px;transform-origin:100% 0;transform:scaleX(0.8347);">1.050,00</div>
<div class="t" style="top:315.04px;font-size:10px;line-height:10px;color:#222;-webkit-text-stroke:.15px #222;left:826px;transform-origin:0 0;transform:scaleX(0.8173);">2789 - UNIDADE SESI/SENAI BENEDITO BENTES</div>
<div class="t" style="top:315.04px;font-size:10px;line-height:10px;color:#222;-webkit-text-stroke:.15px #222;left:1069px;transform-origin:0 0;transform:scaleX(0.9385);">Matutino</div>
<svg style="position:absolute;left:34.2px;top:331.5px" width="7.5" height="12" viewBox="0 0 7.5 12"><path d="M3.75 .2 V1.8 M3.75 9.6 V11.4" stroke="#b01408" stroke-width="1.3"/><path d="M6.3 3.2 C5.9 2.3 5 1.8 3.75 1.8 C2.2 1.8 1.1 2.6 1.1 3.8 C1.1 5.1 2.3 5.5 3.75 5.9 C5.3 6.3 6.5 6.8 6.5 8 C6.5 9.2 5.3 9.8 3.75 9.8 C2.3 9.8 1.2 9.2 .8 8.2" fill="none" stroke="#b01408" stroke-width="1.35"/></svg>
<svg style="position:absolute;left:51.9px;top:332.7px" width="8" height="9" viewBox="0 0 8 9"><rect x="0" y=".7" width="7.8" height="1.5" rx=".4" fill="#b01408"/><rect x="2.6" y="0" width="2.6" height="1" rx=".4" fill="#b01408"/><path d="M.8 2.5 H7 L6.8 8.2 Q6.8 8.5 6.5 8.5 H1.3 Q1 8.5 1 8.2 Z" fill="#b01408"/></svg>
<div class="t" style="top:335.54px;font-size:10px;line-height:10px;color:#222;-webkit-text-stroke:.15px #222;right:1228px;transform-origin:100% 0;transform:scaleX(0.8750);">198</div>
<div class="t" style="top:335.54px;font-size:10px;line-height:10px;color:#222;-webkit-text-stroke:.15px #222;left:122px;transform-origin:0 0;transform:scaleX(0.8404);">PJ - Tabela de Preço Pessoa Jurídica</div>
<div style="position:absolute;left:446px;top:333.5px;width:12px;height:12px;box-sizing:border-box;background:#fff;border:1px solid #efefef;border-radius:2px;"></div>
<div class="t" style="top:335.54px;font-size:10px;line-height:10px;color:#222;-webkit-text-stroke:.15px #222;left:553.2px;transform-origin:0 0;transform:scaleX(0.8151);">Pessoa Jurídica</div>
<div class="t" style="top:335.54px;font-size:10px;line-height:10px;color:#222;-webkit-text-stroke:.15px #222;right:523.8px;transform-origin:100% 0;transform:scaleX(0.8347);">1.050,00</div>
<div class="t" style="top:335.54px;font-size:10px;line-height:10px;color:#222;-webkit-text-stroke:.15px #222;left:826px;transform-origin:0 0;transform:scaleX(0.8423);">2787 - UNIDADE SENAI POÇO</div>
<div class="t" style="top:335.54px;font-size:10px;line-height:10px;color:#222;-webkit-text-stroke:.15px #222;left:1069px;transform-origin:0 0;transform:scaleX(0.9385);">Matutino</div>
<svg style="position:absolute;left:34.2px;top:352.0px" width="7.5" height="12" viewBox="0 0 7.5 12"><path d="M3.75 .2 V1.8 M3.75 9.6 V11.4" stroke="#b01408" stroke-width="1.3"/><path d="M6.3 3.2 C5.9 2.3 5 1.8 3.75 1.8 C2.2 1.8 1.1 2.6 1.1 3.8 C1.1 5.1 2.3 5.5 3.75 5.9 C5.3 6.3 6.5 6.8 6.5 8 C6.5 9.2 5.3 9.8 3.75 9.8 C2.3 9.8 1.2 9.2 .8 8.2" fill="none" stroke="#b01408" stroke-width="1.35"/></svg>
<svg style="position:absolute;left:51.9px;top:353.2px" width="8" height="9" viewBox="0 0 8 9"><rect x="0" y=".7" width="7.8" height="1.5" rx=".4" fill="#b01408"/><rect x="2.6" y="0" width="2.6" height="1" rx=".4" fill="#b01408"/><path d="M.8 2.5 H7 L6.8 8.2 Q6.8 8.5 6.5 8.5 H1.3 Q1 8.5 1 8.2 Z" fill="#b01408"/></svg>
<div class="t" style="top:356.04px;font-size:10px;line-height:10px;color:#222;-webkit-text-stroke:.15px #222;right:1228px;transform-origin:100% 0;transform:scaleX(0.8750);">199</div>
<div class="t" style="top:356.04px;font-size:10px;line-height:10px;color:#222;-webkit-text-stroke:.15px #222;left:122px;transform-origin:0 0;transform:scaleX(0.8404);">PJ - Tabela de Preço Pessoa Jurídica</div>
<div style="position:absolute;left:446px;top:354.0px;width:12px;height:12px;box-sizing:border-box;background:#fff;border:1px solid #efefef;border-radius:2px;"></div>
<div class="t" style="top:356.04px;font-size:10px;line-height:10px;color:#222;-webkit-text-stroke:.15px #222;left:553.2px;transform-origin:0 0;transform:scaleX(0.8151);">Pessoa Jurídica</div>
<div class="t" style="top:356.04px;font-size:10px;line-height:10px;color:#222;-webkit-text-stroke:.15px #222;right:523.8px;transform-origin:100% 0;transform:scaleX(0.8347);">1.050,00</div>
<div class="t" style="top:356.04px;font-size:10px;line-height:10px;color:#222;-webkit-text-stroke:.15px #222;left:826px;transform-origin:0 0;transform:scaleX(0.8318);">2786 - UNIDADE SESI/SENAI ARAPIRACA</div>
<div class="t" style="top:356.04px;font-size:10px;line-height:10px;color:#222;-webkit-text-stroke:.15px #222;left:1069px;transform-origin:0 0;transform:scaleX(0.9416);">Noturno</div>
<svg style="position:absolute;left:34.2px;top:372.5px" width="7.5" height="12" viewBox="0 0 7.5 12"><path d="M3.75 .2 V1.8 M3.75 9.6 V11.4" stroke="#b01408" stroke-width="1.3"/><path d="M6.3 3.2 C5.9 2.3 5 1.8 3.75 1.8 C2.2 1.8 1.1 2.6 1.1 3.8 C1.1 5.1 2.3 5.5 3.75 5.9 C5.3 6.3 6.5 6.8 6.5 8 C6.5 9.2 5.3 9.8 3.75 9.8 C2.3 9.8 1.2 9.2 .8 8.2" fill="none" stroke="#b01408" stroke-width="1.35"/></svg>
<svg style="position:absolute;left:51.9px;top:373.7px" width="8" height="9" viewBox="0 0 8 9"><rect x="0" y=".7" width="7.8" height="1.5" rx=".4" fill="#b01408"/><rect x="2.6" y="0" width="2.6" height="1" rx=".4" fill="#b01408"/><path d="M.8 2.5 H7 L6.8 8.2 Q6.8 8.5 6.5 8.5 H1.3 Q1 8.5 1 8.2 Z" fill="#b01408"/></svg>
<div class="t" style="top:376.54px;font-size:10px;line-height:10px;color:#222;-webkit-text-stroke:.15px #222;right:1228px;transform-origin:100% 0;transform:scaleX(0.8750);">200</div>
<div class="t" style="top:376.54px;font-size:10px;line-height:10px;color:#222;-webkit-text-stroke:.15px #222;left:122px;transform-origin:0 0;transform:scaleX(0.8404);">PJ - Tabela de Preço Pessoa Jurídica</div>
<div style="position:absolute;left:446px;top:374.5px;width:12px;height:12px;box-sizing:border-box;background:#fff;border:1px solid #efefef;border-radius:2px;"></div>
<div class="t" style="top:376.54px;font-size:10px;line-height:10px;color:#222;-webkit-text-stroke:.15px #222;left:553.2px;transform-origin:0 0;transform:scaleX(0.8151);">Pessoa Jurídica</div>
<div class="t" style="top:376.54px;font-size:10px;line-height:10px;color:#222;-webkit-text-stroke:.15px #222;right:523.8px;transform-origin:100% 0;transform:scaleX(0.8347);">1.050,00</div>
<div class="t" style="top:376.54px;font-size:10px;line-height:10px;color:#222;-webkit-text-stroke:.15px #222;left:826px;transform-origin:0 0;transform:scaleX(0.8173);">2789 - UNIDADE SESI/SENAI BENEDITO BENTES</div>
<div class="t" style="top:376.54px;font-size:10px;line-height:10px;color:#222;-webkit-text-stroke:.15px #222;left:1069px;transform-origin:0 0;transform:scaleX(0.9416);">Noturno</div>
<svg style="position:absolute;left:34.2px;top:393.0px" width="7.5" height="12" viewBox="0 0 7.5 12"><path d="M3.75 .2 V1.8 M3.75 9.6 V11.4" stroke="#b01408" stroke-width="1.3"/><path d="M6.3 3.2 C5.9 2.3 5 1.8 3.75 1.8 C2.2 1.8 1.1 2.6 1.1 3.8 C1.1 5.1 2.3 5.5 3.75 5.9 C5.3 6.3 6.5 6.8 6.5 8 C6.5 9.2 5.3 9.8 3.75 9.8 C2.3 9.8 1.2 9.2 .8 8.2" fill="none" stroke="#b01408" stroke-width="1.35"/></svg>
<svg style="position:absolute;left:51.9px;top:394.2px" width="8" height="9" viewBox="0 0 8 9"><rect x="0" y=".7" width="7.8" height="1.5" rx=".4" fill="#b01408"/><rect x="2.6" y="0" width="2.6" height="1" rx=".4" fill="#b01408"/><path d="M.8 2.5 H7 L6.8 8.2 Q6.8 8.5 6.5 8.5 H1.3 Q1 8.5 1 8.2 Z" fill="#b01408"/></svg>
<div class="t" style="top:397.04px;font-size:10px;line-height:10px;color:#222;-webkit-text-stroke:.15px #222;right:1228px;transform-origin:100% 0;transform:scaleX(0.8750);">201</div>
<div class="t" style="top:397.04px;font-size:10px;line-height:10px;color:#222;-webkit-text-stroke:.15px #222;left:122px;transform-origin:0 0;transform:scaleX(0.8404);">PJ - Tabela de Preço Pessoa Jurídica</div>
<div style="position:absolute;left:446px;top:395.0px;width:12px;height:12px;box-sizing:border-box;background:#fff;border:1px solid #efefef;border-radius:2px;"></div>
<div class="t" style="top:397.04px;font-size:10px;line-height:10px;color:#222;-webkit-text-stroke:.15px #222;left:553.2px;transform-origin:0 0;transform:scaleX(0.8151);">Pessoa Jurídica</div>
<div class="t" style="top:397.04px;font-size:10px;line-height:10px;color:#222;-webkit-text-stroke:.15px #222;right:523.8px;transform-origin:100% 0;transform:scaleX(0.8347);">1.050,00</div>
<div class="t" style="top:397.04px;font-size:10px;line-height:10px;color:#222;-webkit-text-stroke:.15px #222;left:826px;transform-origin:0 0;transform:scaleX(0.8423);">2787 - UNIDADE SENAI POÇO</div>
<div class="t" style="top:397.04px;font-size:10px;line-height:10px;color:#222;-webkit-text-stroke:.15px #222;left:1069px;transform-origin:0 0;transform:scaleX(0.9416);">Noturno</div>
<svg style="position:absolute;left:34.2px;top:413.5px" width="7.5" height="12" viewBox="0 0 7.5 12"><path d="M3.75 .2 V1.8 M3.75 9.6 V11.4" stroke="#b01408" stroke-width="1.3"/><path d="M6.3 3.2 C5.9 2.3 5 1.8 3.75 1.8 C2.2 1.8 1.1 2.6 1.1 3.8 C1.1 5.1 2.3 5.5 3.75 5.9 C5.3 6.3 6.5 6.8 6.5 8 C6.5 9.2 5.3 9.8 3.75 9.8 C2.3 9.8 1.2 9.2 .8 8.2" fill="none" stroke="#b01408" stroke-width="1.35"/></svg>
<svg style="position:absolute;left:51.9px;top:414.7px" width="8" height="9" viewBox="0 0 8 9"><rect x="0" y=".7" width="7.8" height="1.5" rx=".4" fill="#b01408"/><rect x="2.6" y="0" width="2.6" height="1" rx=".4" fill="#b01408"/><path d="M.8 2.5 H7 L6.8 8.2 Q6.8 8.5 6.5 8.5 H1.3 Q1 8.5 1 8.2 Z" fill="#b01408"/></svg>
<div class="t" style="top:417.54px;font-size:10px;line-height:10px;color:#222;-webkit-text-stroke:.15px #222;right:1228px;transform-origin:100% 0;transform:scaleX(0.8750);">202</div>
<div class="t" style="top:417.54px;font-size:10px;line-height:10px;color:#222;-webkit-text-stroke:.15px #222;left:122px;transform-origin:0 0;transform:scaleX(0.8404);">PJ - Tabela de Preço Pessoa Jurídica</div>
<div style="position:absolute;left:446px;top:415.5px;width:12px;height:12px;box-sizing:border-box;background:#fff;border:1px solid #efefef;border-radius:2px;"></div>
<div class="t" style="top:417.54px;font-size:10px;line-height:10px;color:#222;-webkit-text-stroke:.15px #222;left:553.2px;transform-origin:0 0;transform:scaleX(0.8151);">Pessoa Jurídica</div>
<div class="t" style="top:417.54px;font-size:10px;line-height:10px;color:#222;-webkit-text-stroke:.15px #222;right:523.8px;transform-origin:100% 0;transform:scaleX(0.8347);">1.050,00</div>
<div class="t" style="top:417.54px;font-size:10px;line-height:10px;color:#222;-webkit-text-stroke:.15px #222;left:826px;transform-origin:0 0;transform:scaleX(0.8318);">2786 - UNIDADE SESI/SENAI ARAPIRACA</div>
<div class="t" style="top:417.54px;font-size:10px;line-height:10px;color:#222;-webkit-text-stroke:.15px #222;left:1069px;transform-origin:0 0;transform:scaleX(0.9039);">Não Informado</div>
<svg style="position:absolute;left:34.2px;top:434.0px" width="7.5" height="12" viewBox="0 0 7.5 12"><path d="M3.75 .2 V1.8 M3.75 9.6 V11.4" stroke="#b01408" stroke-width="1.3"/><path d="M6.3 3.2 C5.9 2.3 5 1.8 3.75 1.8 C2.2 1.8 1.1 2.6 1.1 3.8 C1.1 5.1 2.3 5.5 3.75 5.9 C5.3 6.3 6.5 6.8 6.5 8 C6.5 9.2 5.3 9.8 3.75 9.8 C2.3 9.8 1.2 9.2 .8 8.2" fill="none" stroke="#b01408" stroke-width="1.35"/></svg>
<svg style="position:absolute;left:51.9px;top:435.2px" width="8" height="9" viewBox="0 0 8 9"><rect x="0" y=".7" width="7.8" height="1.5" rx=".4" fill="#b01408"/><rect x="2.6" y="0" width="2.6" height="1" rx=".4" fill="#b01408"/><path d="M.8 2.5 H7 L6.8 8.2 Q6.8 8.5 6.5 8.5 H1.3 Q1 8.5 1 8.2 Z" fill="#b01408"/></svg>
<div class="t" style="top:438.04px;font-size:10px;line-height:10px;color:#222;-webkit-text-stroke:.15px #222;right:1228px;transform-origin:100% 0;transform:scaleX(0.8750);">203</div>
<div class="t" style="top:438.04px;font-size:10px;line-height:10px;color:#222;-webkit-text-stroke:.15px #222;left:122px;transform-origin:0 0;transform:scaleX(0.8404);">PJ - Tabela de Preço Pessoa Jurídica</div>
<div style="position:absolute;left:446px;top:436.0px;width:12px;height:12px;box-sizing:border-box;background:#fff;border:1px solid #efefef;border-radius:2px;"></div>
<div class="t" style="top:438.04px;font-size:10px;line-height:10px;color:#222;-webkit-text-stroke:.15px #222;left:553.2px;transform-origin:0 0;transform:scaleX(0.8151);">Pessoa Jurídica</div>
<div class="t" style="top:438.04px;font-size:10px;line-height:10px;color:#222;-webkit-text-stroke:.15px #222;right:523.8px;transform-origin:100% 0;transform:scaleX(0.8347);">1.050,00</div>
<div class="t" style="top:438.04px;font-size:10px;line-height:10px;color:#222;-webkit-text-stroke:.15px #222;left:826px;transform-origin:0 0;transform:scaleX(0.8173);">2789 - UNIDADE SESI/SENAI BENEDITO BENTES</div>
<div class="t" style="top:438.04px;font-size:10px;line-height:10px;color:#222;-webkit-text-stroke:.15px #222;left:1069px;transform-origin:0 0;transform:scaleX(0.9039);">Não Informado</div>
<svg style="position:absolute;left:34.2px;top:454.5px" width="7.5" height="12" viewBox="0 0 7.5 12"><path d="M3.75 .2 V1.8 M3.75 9.6 V11.4" stroke="#b01408" stroke-width="1.3"/><path d="M6.3 3.2 C5.9 2.3 5 1.8 3.75 1.8 C2.2 1.8 1.1 2.6 1.1 3.8 C1.1 5.1 2.3 5.5 3.75 5.9 C5.3 6.3 6.5 6.8 6.5 8 C6.5 9.2 5.3 9.8 3.75 9.8 C2.3 9.8 1.2 9.2 .8 8.2" fill="none" stroke="#b01408" stroke-width="1.35"/></svg>
<svg style="position:absolute;left:51.9px;top:455.7px" width="8" height="9" viewBox="0 0 8 9"><rect x="0" y=".7" width="7.8" height="1.5" rx=".4" fill="#b01408"/><rect x="2.6" y="0" width="2.6" height="1" rx=".4" fill="#b01408"/><path d="M.8 2.5 H7 L6.8 8.2 Q6.8 8.5 6.5 8.5 H1.3 Q1 8.5 1 8.2 Z" fill="#b01408"/></svg>
<div class="t" style="top:458.54px;font-size:10px;line-height:10px;color:#222;-webkit-text-stroke:.15px #222;right:1228px;transform-origin:100% 0;transform:scaleX(0.8750);">204</div>
<div class="t" style="top:458.54px;font-size:10px;line-height:10px;color:#222;-webkit-text-stroke:.15px #222;left:122px;transform-origin:0 0;transform:scaleX(0.8404);">PJ - Tabela de Preço Pessoa Jurídica</div>
<div style="position:absolute;left:446px;top:456.5px;width:12px;height:12px;box-sizing:border-box;background:#fff;border:1px solid #efefef;border-radius:2px;"></div>
<div class="t" style="top:458.54px;font-size:10px;line-height:10px;color:#222;-webkit-text-stroke:.15px #222;left:553.2px;transform-origin:0 0;transform:scaleX(0.8151);">Pessoa Jurídica</div>
<div class="t" style="top:458.54px;font-size:10px;line-height:10px;color:#222;-webkit-text-stroke:.15px #222;right:523.8px;transform-origin:100% 0;transform:scaleX(0.8347);">1.050,00</div>
<div class="t" style="top:458.54px;font-size:10px;line-height:10px;color:#222;-webkit-text-stroke:.15px #222;left:826px;transform-origin:0 0;transform:scaleX(0.8423);">2787 - UNIDADE SENAI POÇO</div>
<div class="t" style="top:458.54px;font-size:10px;line-height:10px;color:#222;-webkit-text-stroke:.15px #222;left:1069px;transform-origin:0 0;transform:scaleX(0.9039);">Não Informado</div>
<div style="position:absolute;left:43px;top:511px;width:22px;height:20.5px;background:#d2d2d2;border-radius:2px;"></div>
<div class="t" style="top:517.04px;font-size:10px;line-height:10px;color:#333;-webkit-text-stroke:.15px #333;left:24.2px;transform-origin:0 0;transform:scaleX(0.8750);">10</div>
<div class="t" style="top:517.04px;font-size:10px;line-height:10px;color:#333;-webkit-text-stroke:.15px #333;left:54px;transform-origin:50% 0;transform:translateX(-50%) scaleX(0.8750);">25</div>
<div class="t" style="top:517.04px;font-size:10px;line-height:10px;color:#333;-webkit-text-stroke:.15px #333;left:80.5px;transform-origin:50% 0;transform:translateX(-50%) scaleX(0.8750);">50</div>
<div class="t" style="top:517.04px;font-size:10px;line-height:10px;color:#333;-webkit-text-stroke:.15px #333;left:109px;transform-origin:50% 0;transform:translateX(-50%) scaleX(0.8750);">100</div>
<div class="t" style="top:517.04px;font-size:10px;line-height:10px;color:#333;-webkit-text-stroke:.15px #333;left:143.5px;transform-origin:50% 0;transform:translateX(-50%) scaleX(0.8750);">Todos</div>
<div class="t" style="top:517.04px;font-size:10px;line-height:10px;color:#555;-webkit-text-stroke:.15px #555;right:224px;transform-origin:100% 0;transform:scaleX(0.8683);">Página 1 de 1 (10 itens)</div>
<svg style="position:absolute;left:1129px;top:514px" width="8" height="12" viewBox="0 0 8 12"><path d="M7 .7 L1.3 6 L7 11.3" fill="none" stroke="#aaa" stroke-width="1.1"/></svg>
<div style="position:absolute;left:1145px;top:511px;width:16px;height:20.5px;background:#d2d2d2;border-radius:2px;"></div>
<div class="t" style="top:517.04px;font-size:10px;line-height:10px;color:#333;-webkit-text-stroke:.15px #333;left:1153px;transform-origin:50% 0;transform:translateX(-50%) scaleX(0.8750);">1</div>
<svg style="position:absolute;left:1167px;top:514px" width="8" height="12" viewBox="0 0 8 12"><path d="M1 .7 L6.7 6 L1 11.3" fill="none" stroke="#aaa" stroke-width="1.1"/></svg>
<div style="position:absolute;left:1191px;top:215px;width:138px;height:386px;background:#fff;border-radius:4px 4px 0 0;"></div>
<div style="position:absolute;left:1197px;top:221px;width:126px;height:20px;box-sizing:border-box;background:#fff;border:1px solid #dcdcdc;border-radius:3px;"></div>
<svg style="position:absolute;left:1203px;top:225.6px" width="9" height="9" viewBox="0 0 9 9"><circle cx="3.6" cy="3.6" r="2.8" fill="none" stroke="#888" stroke-width="1.1"/><path d="M5.7 5.7 L8.5 8.5" stroke="#888" stroke-width="1.2"/></svg>
<div class="t" style="top:227.04px;font-size:10px;line-height:10px;color:#8f8f8f;-webkit-text-stroke:0;left:1216.4px;transform-origin:0 0;transform:scaleX(0.8148);">Pesquisar ...</div>
<svg style="position:absolute;left:1205.5px;top:258.8px" width="5" height="3" viewBox="0 0 5 3"><path d="M0 0 H4.4 L2.2 2.4 Z" fill="#111"/></svg>
<svg style="position:absolute;left:1225px;top:256px" width="13" height="11" viewBox="0 0 13 11"><path d="M.75 2 Q.75 .7 2 .7 H4.4 Q5 .7 5.4 1.3 L5.9 2 Q6.2 2.4 6.8 2.4 H11 Q12.25 2.4 12.25 3.6 V9.3 Q12.25 10.4 11 10.4 H2 Q.75 10.4 .75 9.3 Z" fill="none" stroke="#111" stroke-width="1.25"/></svg>
<div class="t" style="top:250.84px;font-size:10px;line-height:10px;color:#111;-webkit-text-stroke:.35px #111;left:1245px;transform-origin:0 0;transform:scaleX(0.8995);">Dados</div>
<div class="t" style="top:262.74px;font-size:10px;line-height:10px;color:#111;-webkit-text-stroke:.35px #111;left:1245px;transform-origin:0 0;transform:scaleX(0.8993);">Cadastrais</div>
<svg style="position:absolute;left:1236.3px;top:285.9px" width="11" height="12" viewBox="0 0 11 12"><rect x=".65" y=".65" width="9.2" height="10.2" rx="1.2" fill="none" stroke="#111" stroke-width="1.3"/><path d="M3.2 4.6 H7.4 M3.2 6.6 H7.4" stroke="#111" stroke-width="1.1"/></svg>
<div class="t" style="top:287.54px;font-size:10px;line-height:10px;color:#111;-webkit-text-stroke:.35px #111;left:1254.3px;transform-origin:0 0;transform:scaleX(0.9189);">Identificação</div>
<svg style="position:absolute;left:1236.3px;top:317.79999999999995px" width="11" height="12" viewBox="0 0 11 12"><rect x=".65" y=".65" width="9.2" height="10.2" rx="1.2" fill="none" stroke="#111" stroke-width="1.3"/><path d="M3.2 4.6 H7.4 M3.2 6.6 H7.4" stroke="#111" stroke-width="1.1"/></svg>
<div class="t" style="top:312.84px;font-size:10px;line-height:10px;color:#111;-webkit-text-stroke:.35px #111;left:1254.3px;transform-origin:0 0;transform:scaleX(0.8750);">Atributos</div>
<div class="t" style="top:324.54px;font-size:10px;line-height:10px;color:#111;-webkit-text-stroke:.35px #111;left:1254.3px;transform-origin:0 0;transform:scaleX(0.8750);">Customizados</div>
<svg style="position:absolute;left:1236.3px;top:352.9px" width="11" height="12" viewBox="0 0 11 12"><rect x=".65" y=".65" width="9.2" height="10.2" rx="1.2" fill="none" stroke="#111" stroke-width="1.3"/><path d="M3.2 4.6 H7.4 M3.2 6.6 H7.4" stroke="#111" stroke-width="1.1"/></svg>
<div class="t" style="top:349.54px;font-size:10px;line-height:10px;color:#111;-webkit-text-stroke:.35px #111;left:1254.3px;transform-origin:0 0;transform:scaleX(0.8750);">Classificadores</div>
<div class="t" style="top:361.54px;font-size:10px;line-height:10px;color:#111;-webkit-text-stroke:.35px #111;left:1254.3px;transform-origin:0 0;transform:scaleX(0.8750);">de Ofertas</div>
<svg style="position:absolute;left:1236.3px;top:388.4px" width="11" height="12" viewBox="0 0 11 12"><rect x=".65" y=".65" width="9.2" height="10.2" rx="1.2" fill="none" stroke="#111" stroke-width="1.3"/><path d="M3.2 4.6 H7.4 M3.2 6.6 H7.4" stroke="#111" stroke-width="1.1"/></svg>
<div class="t" style="top:385.54px;font-size:10px;line-height:10px;color:#111;-webkit-text-stroke:.35px #111;left:1254.3px;transform-origin:0 0;transform:scaleX(0.8750);">Unidades de</div>
<div class="t" style="top:397.54px;font-size:10px;line-height:10px;color:#111;-webkit-text-stroke:.35px #111;left:1254.3px;transform-origin:0 0;transform:scaleX(0.8750);">Negócio</div>
<svg style="position:absolute;left:1236.3px;top:424.4px" width="11" height="12" viewBox="0 0 11 12"><rect x=".65" y=".65" width="9.2" height="10.2" rx="1.2" fill="none" stroke="#111" stroke-width="1.3"/><path d="M3.2 4.6 H7.4 M3.2 6.6 H7.4" stroke="#111" stroke-width="1.1"/></svg>
<div class="t" style="top:421.54px;font-size:10px;line-height:10px;color:#111;-webkit-text-stroke:.35px #111;left:1254.3px;transform-origin:0 0;transform:scaleX(0.8750);">Unidades</div>
<div class="t" style="top:433.54px;font-size:10px;line-height:10px;color:#111;-webkit-text-stroke:.35px #111;left:1254.3px;transform-origin:0 0;transform:scaleX(0.8750);">Centros</div>
<svg style="position:absolute;left:1215.5px;top:459.3px" width="5" height="3" viewBox="0 0 5 3"><path d="M0 0 H4.4 L2.2 2.4 Z" fill="#111"/></svg>
<svg style="position:absolute;left:1235.5px;top:457px" width="13" height="11" viewBox="0 0 13 11"><path d="M.75 2 Q.75 .7 2 .7 H4.4 Q5 .7 5.4 1.3 L5.9 2 Q6.2 2.4 6.8 2.4 H11 Q12.25 2.4 12.25 3.6 V9.3 Q12.25 10.4 11 10.4 H2 Q.75 10.4 .75 9.3 Z" fill="none" stroke="#111" stroke-width="1.25"/></svg>
<div class="t" style="top:458.04px;font-size:10px;line-height:10px;color:#111;-webkit-text-stroke:.35px #111;left:1254.6px;transform-origin:0 0;transform:scaleX(0.8750);">Fichas</div>
<svg style="position:absolute;left:1246.3px;top:480.9px" width="11" height="12" viewBox="0 0 11 12"><rect x=".65" y=".65" width="9.2" height="10.2" rx="1.2" fill="none" stroke="#111" stroke-width="1.3"/><path d="M3.2 4.6 H7.4 M3.2 6.6 H7.4" stroke="#111" stroke-width="1.1"/></svg>
<div class="t" style="top:483.04px;font-size:10px;line-height:10px;color:#111;-webkit-text-stroke:.35px #111;left:1263.6px;transform-origin:0 0;transform:scaleX(0.8750);">2024 - Ativa</div>
<svg style="position:absolute;left:1246.3px;top:511.4px" width="11" height="12" viewBox="0 0 11 12"><rect x=".65" y=".65" width="9.2" height="10.2" rx="1.2" fill="none" stroke="#111" stroke-width="1.3"/><path d="M3.2 4.6 H7.4 M3.2 6.6 H7.4" stroke="#111" stroke-width="1.1"/></svg>
<div class="t" style="top:508.54px;font-size:10px;line-height:10px;color:#111;-webkit-text-stroke:.35px #111;left:1263.6px;transform-origin:0 0;transform:scaleX(0.8750);">2023 -</div>
<div class="t" style="top:520.04px;font-size:10px;line-height:10px;color:#111;-webkit-text-stroke:.35px #111;left:1263.6px;transform-origin:0 0;transform:scaleX(0.8750);">Inativa</div>
<div style="position:absolute;left:1229px;top:539px;width:90px;height:30px;background:#a91500;border-radius:3px;"></div>
<svg style="position:absolute;left:1236.8px;top:547.4px" width="11" height="12" viewBox="0 0 11 12"><rect x=".65" y=".65" width="9.2" height="10.2" rx="1.2" fill="none" stroke="#f3c0b8" stroke-width="1.3"/><path d="M3.2 4.6 H7.4 M3.2 6.6 H7.4" stroke="#f3c0b8" stroke-width="1.1"/></svg>
<div class="t" style="top:544.54px;font-size:10px;line-height:10px;color:#fff;-webkit-text-stroke:.35px #fff;left:1254.6px;transform-origin:0 0;transform:scaleX(0.8750);">Tabelas de</div>
<div class="t" style="top:556.04px;font-size:10px;line-height:10px;color:#fff;-webkit-text-stroke:.35px #fff;left:1254.6px;transform-origin:0 0;transform:scaleX(0.8750);">Preço</div>
<svg style="position:absolute;left:1205.5px;top:581.8px" width="5" height="3" viewBox="0 0 5 3"><path d="M0 0 H4.4 L2.2 2.4 Z" fill="#111"/></svg>
<svg style="position:absolute;left:1224.5px;top:579.5px" width="13" height="11" viewBox="0 0 13 11"><path d="M.75 2 Q.75 .7 2 .7 H4.4 Q5 .7 5.4 1.3 L5.9 2 Q6.2 2.4 6.8 2.4 H11 Q12.25 2.4 12.25 3.6 V9.3 Q12.25 10.4 11 10.4 H2 Q.75 10.4 .75 9.3 Z" fill="none" stroke="#111" stroke-width="1.25"/></svg>
<div class="t" style="top:581.04px;font-size:10px;line-height:10px;color:#111;-webkit-text-stroke:.35px #111;left:1244px;transform-origin:0 0;transform:scaleX(0.9240);">Acompanhamento</div>
</body></html>
